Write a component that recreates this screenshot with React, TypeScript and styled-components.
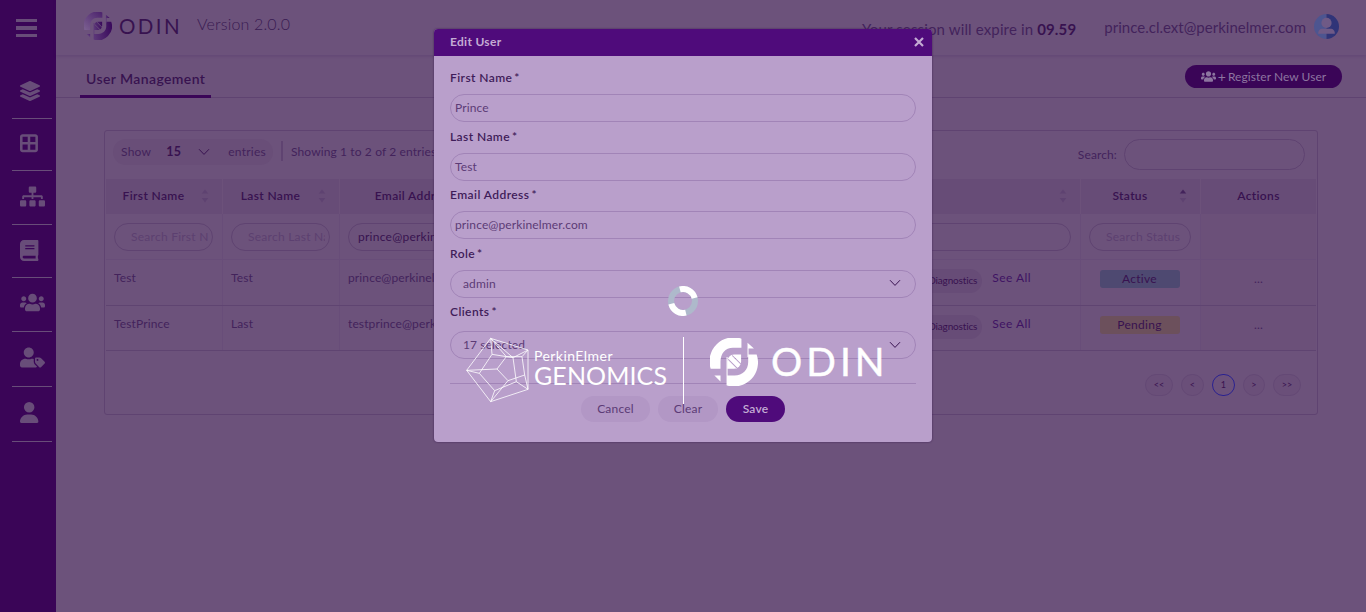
import React from 'react';
import styled, { createGlobalStyle } from 'styled-components';
import { FaLayerGroup, FaSitemap, FaBook, FaUsers, FaUserTag } from 'react-icons/fa';
import { FaBorderAll, FaUser } from 'react-icons/fa6';
import type { IconType } from 'react-icons';

const c = {
  page: '#6c527b',
  nav: '#3a0557',
  navIcon: '#684d79',
  line: '#5f4371',
  rowLine: '#5f4471',
  faint: '#684d79',
  shade: '#674c77',
  ink: '#381250',
  text: '#43235b',
  modal: '#b99fcb',
  brand: '#4f0b7b',
  field: '#a184b7',
  label: '#3f1c59',
  value: '#5c3b76',
};

const GlobalStyle = createGlobalStyle`
  * { box-sizing: border-box; }
  body {
    margin: 0;
    background: ${c.page};
    font-family: Lato, 'Open Sans', sans-serif;
    font-size: 12px;
    letter-spacing: 0.12px;
    color: ${c.text};
    overflow: hidden;
  }
`;

const Shell = styled.div`
  display: flex;
  width: 1366px;
  height: 612px;
  background: ${c.page};
`;

const Sidebar = styled.nav`
  flex: none;
  width: 56px;
  padding: 19px 4px 0 12px;
  background: ${c.nav};
  color: ${c.navIcon};
`;

const Burger = styled.div`
  display: grid;
  gap: 4px;
  width: 21px;
  margin: 0 0 28px 4px;
  span {
    height: 3.4px;
    background: currentColor;
  }
`;

const NavItem = styled.div<{ $h: number; $lift: number }>`
  display: flex;
  align-items: center;
  height: ${(p) => p.$h}px;
  padding: 0 0 ${(p) => p.$lift * 2}px 8px;
  border-bottom: 1px solid ${c.navIcon};
`;

const Main = styled.div`
  flex: 1;
  min-width: 0;
`;

const Header = styled.header`
  display: flex;
  align-items: flex-start;
  height: 55px;
  padding: 12px 27px 0 28px;
  box-shadow: 0 1px 3px rgba(60, 20, 90, 0.2);
`;

const Brand = styled.span`
  width: 66px;
  margin: 0 0 0 7px;
  font-size: 20.5px;
  line-height: 28px;
  letter-spacing: 2.4px;
  color: ${c.ink};
`;

const Version = styled.span`
  margin: 1px auto 0 12px;
  font-size: 16px;
  font-weight: 300;
  line-height: 22px;
  letter-spacing: 0.16px;
  color: #391a52;
`;

const Session = styled.span`
  margin: 7px 28px 0 0;
  font-size: 15px;
  line-height: 20px;
  letter-spacing: 0.14px;
  b { color: ${c.ink}; }
`;

const Account = styled.span`
  margin: 5px 8px 0 0;
  font-size: 15px;
  line-height: 20px;
  letter-spacing: 0.02px;
`;

const Avatar = styled.svg`
  margin-top: 2px;
`;

const TabBar = styled.div`
  display: flex;
  justify-content: space-between;
  height: 43px;
  padding: 10px 24px 0 24px;
  border-bottom: 1px solid ${c.line};
`;

const Tab = styled.div`
  width: 131px;
  height: 33px;
  padding: 3px 6px 0;
  font-size: 14px;
  font-weight: 600;
  line-height: 22px;
  letter-spacing: 0.4px;
  white-space: nowrap;
  color: ${c.ink};
  border-bottom: 3px solid ${c.nav};
`;

const RegisterButton = styled.button`
  display: flex;
  align-items: center;
  justify-content: center;
  width: 157px;
  height: 23px;
  padding: 0 0 1px;
  border: 0;
  border-radius: 12px;
  background: ${c.nav};
  font: inherit;
  letter-spacing: 0.05px;
  color: #8d75a0;
  svg { margin-right: 2px; }
  b { margin-right: 2px; font-size: 14px; font-weight: 400; }
`;

const Card = styled.section`
  width: 1214px;
  height: 285px;
  margin: 32px 0 0 48px;
  border: 1px solid ${c.line};
  border-radius: 3px;
`;

const Toolbar = styled.div`
  display: flex;
  height: 48px;
  padding: 8px 12px 0 8px;
`;

const Entries = styled.div`
  display: flex;
  align-items: center;
  width: 160px;
  height: 26px;
  padding: 0 0 1px 8px;
  border-radius: 13px;
  background: #694e78;
  letter-spacing: 0.25px;
  b { margin: 0 17px 0 15px; font-size: 12.5px; font-weight: 700; color: ${c.ink}; }
  svg { margin-right: 18px; }
`;

const Showing = styled.div`
  height: 20px;
  margin: 2px auto 0 8px;
  padding-left: 8px;
  border-left: 2px solid ${c.line};
  line-height: 22px;
  white-space: nowrap;
`;

const SearchLabel = styled.label`
  display: flex;
  align-items: center;
  gap: 7px;
  height: 31px;
`;

const SearchBox = styled.span`
  width: 181px;
  height: 31px;
  border: 1px solid ${c.line};
  border-radius: 16px;
`;

const GridRow = styled.div<{ $h: number; $head?: boolean; $filter?: boolean }>`
  display: grid;
  grid-template-columns: 117px 117px 170px 571px 120px 115px;
  height: ${(p) => p.$h}px;
  margin: 0 1px;
  background: ${(p) => (p.$head ? c.shade : 'transparent')};
  border-bottom: ${(p) => (p.$head ? 0 : 1)}px solid ${(p) => (p.$filter ? c.faint : c.rowLine)};
`;

const HeadCell = styled.div`
  display: flex;
  align-items: center;
  padding: 0 13px 2px 0;
  font-weight: 600;
  letter-spacing: 0.36px;
  color: ${c.ink};
  border-right: 1px solid #6c517a;
  &:last-child { padding-right: 0; border: 0; }
  span { flex: 1; text-align: center; }
`;

const Cell = styled.div<{ $center?: boolean; $filter?: boolean }>`
  display: flex;
  justify-content: ${(p) => (p.$center ? 'center' : 'flex-start')};
  padding: ${(p) => (p.$filter ? 9 : 8)}px 8px 0;
  line-height: 19px;
  white-space: nowrap;
  border-right: 1px solid ${c.faint};
  overflow: hidden;
  &:last-child { background: #6b5079; border: 0; }
`;

const ClientsCell = styled(Cell)`
  justify-content: flex-end;
  padding-right: 49px;
  letter-spacing: 0.45px;
  color: #3f1363;
`;

const Chip = styled.span`
  height: 24px;
  margin: 1px 10px 0 0;
  padding: 0 5px 0 12px;
  border-radius: 12px;
  background: ${c.shade};
  font-size: 10px;
  line-height: 23px;
  letter-spacing: -0.15px;
  color: ${c.ink};
`;

const Filter = styled.div<{ $value?: boolean }>`
  flex: none;
  width: calc(100% - ${(p) => (p.$value ? 0 : 1)}px);
  height: 28px;
  padding: 0 4px 0 ${(p) => (p.$value ? 9 : 16)}px;
  border: 1px solid ${c.line};
  border-radius: 14px;
  line-height: 26px;
  letter-spacing: 0.25px;
  color: ${(p) => (p.$value ? c.ink : '#5c4070')};
  span { display: block; overflow: hidden; }
`;

const Status = styled.span<{ $tone: string }>`
  width: 80px;
  height: 18px;
  margin: 2px 2px 0 0;
  border-radius: 3px;
  background: ${(p) => p.$tone};
  line-height: 17px;
  letter-spacing: 0.3px;
  text-align: center;
  color: ${c.ink};
`;

const Dots = styled.span`
  margin-top: 1px;
`;

const Pager = styled.div`
  display: flex;
  justify-content: flex-end;
  gap: 8px;
  padding: 23px 16px 0 0;
`;

const Page = styled.span<{ $w: number; $on?: boolean }>`
  width: ${(p) => p.$w}px;
  height: 22px;
  border: 1px solid ${(p) => (p.$on ? '#2a2190' : '#644975')};
  border-radius: 11px;
  background: ${(p) => (p.$on ? 'transparent' : '#6a4f79')};
  font-size: 9px;
  line-height: 19px;
  text-align: center;
  color: ${c.ink};
`;

const Modal = styled.div`
  position: absolute;
  left: 434px;
  top: 29px;
  width: 498px;
  height: 413px;
  border-radius: 4px;
  background: ${c.modal};
  box-shadow: 0 0 2px #3b1c50;
  overflow: hidden;
`;

const ModalHead = styled.div`
  display: flex;
  align-items: center;
  justify-content: space-between;
  height: 27px;
  padding: 0 8px 2px 16px;
  background: ${c.brand};
  font-weight: 700;
  letter-spacing: 0.3px;
  color: #c4abd4;
`;

const ModalBody = styled.div`
  padding: 15px 16px 0;
`;

const Field = styled.div<{ $tall: boolean }>`
  height: ${(p) => (p.$tall ? 72 : 58.5)}px;
`;

const Label = styled.div<{ $tall: boolean }>`
  height: 16px;
  margin-bottom: ${(p) => (p.$tall ? 10 : 7)}px;
  line-height: 14.8px;
  font-weight: 600;
  letter-spacing: 0.42px;
  color: ${c.label};
  span { margin-left: 2px; }
`;

const Input = styled.div<{ $select?: boolean }>`
  display: flex;
  align-items: center;
  justify-content: space-between;
  width: 466px;
  height: 28px;
  padding: 0 14px 1px ${(p) => (p.$select ? 12 : 4)}px;
  border: 1px solid ${c.field};
  border-radius: 14px;
  letter-spacing: 0.12px;
  color: ${c.value};
`;

const Footer = styled.div`
  display: flex;
  justify-content: center;
  gap: 8px;
  margin-top: 6px;
  padding-top: 12px;
  border-top: 1px solid ${c.field};
`;

const Button = styled.button<{ $w: number; $primary?: boolean }>`
  width: ${(p) => p.$w}px;
  height: 26px;
  padding: 0 0 1px;
  border: 0;
  border-radius: 13px;
  background: ${(p) => (p.$primary ? c.brand : '#b297c5')};
  font: inherit;
  font-weight: ${(p) => (p.$primary ? 600 : 400)};
  letter-spacing: 0.2px;
  color: ${(p) => (p.$primary ? '#c4abd4' : c.value)};
`;

const Loader = styled.div`
  position: absolute;
  left: 466px;
  top: 286px;
  width: 434px;
  color: #fff;
`;

const Spinner = styled.svg`
  display: block;
  margin: 0 auto 21px;
`;

const Logos = styled.div`
  display: flex;
  align-items: flex-start;
  height: 68px;
`;

const Genomics = styled.div`
  flex: none;
  width: 154px;
  height: 67px;
  padding: 12px 0 0 4px;
  border-right: 1.5px solid #fff;
  white-space: nowrap;
  div { font-size: 14px; line-height: 14px; letter-spacing: 0.45px; }
  strong { display: block; font-size: 25px; font-weight: 400; line-height: 24px; letter-spacing: 0.1px; }
`;

const BigMark = styled.span`
  margin: 1px 13px 0 26px;
`;

const BigBrand = styled.span`
  font-size: 39px;
  line-height: 48px;
  letter-spacing: 4px;
  -webkit-text-stroke: 0.4px #fff;
`;

function Chevron() {
  return (
    <svg width="12" height="8" viewBox="0 0 12 8" fill="none" stroke={c.ink} strokeWidth="1">
      <path d="M1 1.2 L6 6.4 L11 1.2" />
    </svg>
  );
}

function Sort({ asc }: { asc?: boolean }) {
  return (
    <svg width="8" height="14" viewBox="0 0 8 14">
      <path d="M4 0.5 L7.2 4.5 H0.8 Z" fill={asc ? '#43235b' : '#5e4271'} />
      <path d="M4 13.5 L7.2 9 H0.8 Z" fill="#5e4271" />
    </svg>
  );
}

function OdinMark({ size, left, right }: { size: number; left: string; right: string }) {
  return (
    <svg width={size} height={size} viewBox="17 24 142 142" display="block">
      <g fill={left}>
        <path d="M110 26 A71 71 0 0 0 19 115 H48 V95 C48 70 62 53 85 53 H110 Z" />
        <path d="M30 135 H48 V153 Z" />
      </g>
      <g fill={right}>
        <path d="M130 73 H155 A71 71 0 0 1 66 164 V80 H69 V135 H90 C113 135 130 118 130 95 Z" />
        <path d="M128 38 L147 55 H131 V80 H128 Z" />
        <path
          fillRule="evenodd"
          d="M88 73 H109 V94 A21 21 0 0 1 88 115 H68 V94 A20 20 0 0 1 88 73 Z M70 88 L96 114 L98 112 L72 86 Z M81 76 L107 102 L108 99 L84 75 Z"
        />
      </g>
    </svg>
  );
}

function Polyhedron() {
  return (
    <svg width="64" height="68" viewBox="14 21 192 204" fill="none" stroke="#fff" strokeWidth="2.4" strokeLinejoin="round">
      <path d="M88 25 L200 60 V178 L88 215 L16 121 Z" />
      <path d="M88 25 L92 73 L54 130 L100 182 L165 155 L155 83 Z M92 73 L155 83 L200 60" />
      <path d="M16 121 L54 130 M100 182 L88 215 M165 155 L200 178" />
      <path d="M16 121 L107 117 L135 80 L182 80 L190 135 L140 152 L107 117" />
      <path d="M135 80 L88 25 M182 80 L200 60 M190 135 L200 178 M140 152 L88 215" />
    </svg>
  );
}

const nav: [IconType, number, number, number][] = [
  [FaLayerGroup, 20, 54, 0.5],
  [FaBorderAll, 20.5, 52, 1],
  [FaSitemap, 25, 54, 1.5],
  [FaBook, 21, 53, 1],
  [FaUsers, 25, 54, 2],
  [FaUserTag, 25, 55, 2],
  [FaUser, 21, 55, 1.5],
];

const rows = [
  { first: 'Test', last: 'Test', email: 'prince@perkinelmer.com', status: 'Active', tone: '#4e4971' },
  { first: 'TestPrince', last: 'Last', email: 'testprince@perkinelmer.com', status: 'Pending', tone: '#6c505c' },
];

const fields = ['Prince', 'Test', 'prince@perkinelmer.com', 'admin', '17 selected'];
const labels = ['First Name', 'Last Name', 'Email Address', 'Role', 'Clients'];

export default function App() {
  return (
    <>
      <GlobalStyle />
      <Shell>
        <Sidebar>
          <Burger><span /><span /><span /></Burger>
          {nav.map(([Icon, size, h, lift], i) => (
            <NavItem key={i} $h={h} $lift={lift}>
              <Icon size={size} preserveAspectRatio="xMinYMid meet" />
            </NavItem>
          ))}
        </Sidebar>
        <Main>
          <Header>
            <svg width="0" height="0">
              <defs>
                <linearGradient id="markLeft" x1="0" y1="1" x2="1" y2="0">
                  <stop offset="0" stopColor="#7c6191" />
                  <stop offset="1" stopColor="#4b216c" />
                </linearGradient>
                <linearGradient id="markRight" x1="0" y1="0.6" x2="1" y2="0.4">
                  <stop offset="0" stopColor="#5b3678" />
                  <stop offset="1" stopColor="#3a0a5c" />
                </linearGradient>
              </defs>
            </svg>
            <OdinMark size={28} left="url(#markLeft)" right="url(#markRight)" />
            <Brand>ODIN</Brand>
            <Version>Version 2.0.0</Version>
            <Session>Your session will expire in <b>09.59</b></Session>
            <Account>prince.cl.ext@perkinelmer.com</Account>
            <Avatar width="25" height="25" viewBox="0 0 24 24">
              <path d="M12 0 A12 12 0 0 0 12 24 Z" fill="#4d5590" />
              <path d="M12 0 A12 12 0 0 1 12 24 Z" fill="#303478" />
              <circle cx="12" cy="8.6" r="4.9" fill="#6f5a86" />
              <path d="M4 19 C4 15.5 6 14.2 8 14.2 H16 C18 14.2 20 15.5 20 19 Z" fill="#6f5a86" />
            </Avatar>
          </Header>
          <TabBar>
            <Tab>User Management</Tab>
            <RegisterButton>
              <FaUsers size={15} />
              <b>+</b>
              Register New User
            </RegisterButton>
          </TabBar>
          <Card>
            <Toolbar>
              <Entries>Show<b>15</b><Chevron />entries</Entries>
              <Showing>Showing 1 to 2 of 2 entries</Showing>
              <SearchLabel>Search:<SearchBox /></SearchLabel>
            </Toolbar>
            <GridRow $h={35} $head>
              <HeadCell><span>First Name</span><Sort /></HeadCell>
              <HeadCell><span>Last Name</span><Sort /></HeadCell>
              <HeadCell><span>Email Address</span><Sort /></HeadCell>
              <HeadCell><span /><Sort /></HeadCell>
              <HeadCell><span>Status</span><Sort asc /></HeadCell>
              <HeadCell><span>Actions</span></HeadCell>
            </GridRow>
            <GridRow $h={46} $filter>
              <Cell $filter><Filter><span>Search First Name</span></Filter></Cell>
              <Cell $filter><Filter><span>Search Last Name</span></Filter></Cell>
              <Cell $filter><Filter $value><span>prince@perkinelmer.com</span></Filter></Cell>
              <Cell $filter><Filter /></Cell>
              <Cell $filter><Filter><span>Search Status</span></Filter></Cell>
              <Cell />
            </GridRow>
            {rows.map((r) => (
              <GridRow key={r.status} $h={r.status === 'Active' ? 46 : 45}>
                <Cell>{r.first}</Cell>
                <Cell>{r.last}</Cell>
                <Cell>{r.email}</Cell>
                <ClientsCell><Chip>Diagnostics</Chip>See All</ClientsCell>
                <Cell $center><Status $tone={r.tone}>{r.status}</Status></Cell>
                <Cell $center><Dots>...</Dots></Cell>
              </GridRow>
            ))}
            <Pager>
              <Page $w={28}>&lt;&lt;</Page>
              <Page $w={23}>&lt;</Page>
              <Page $w={23} $on>1</Page>
              <Page $w={22}>&gt;</Page>
              <Page $w={28}>&gt;&gt;</Page>
            </Pager>
          </Card>
        </Main>
      </Shell>
      <Modal>
        <ModalHead>
          Edit User
          <svg width="10" height="10" viewBox="0 0 10 10" stroke="#c4abd4" strokeWidth="2.2">
            <path d="M1 1 L9 9 M9 1 L1 9" />
          </svg>
        </ModalHead>
        <ModalBody>
          {labels.map((l, i) => (
            <Field key={l} $tall={i === 4}>
              <Label $tall={i === 4}>{l}<span>*</span></Label>
              <Input $select={i > 2}>{fields[i]}{i > 2 && <Chevron />}</Input>
            </Field>
          ))}
          <Footer>
            <Button $w={69}>Cancel</Button>
            <Button $w={60}>Clear</Button>
            <Button $w={59} $primary>Save</Button>
          </Footer>
        </ModalBody>
      </Modal>
      <Loader>
        <Spinner width="30" height="30" viewBox="0 0 30 30" fill="none" strokeWidth="6">
          <circle cx="15" cy="15" r="12" stroke="#aeb9cb" />
          <circle cx="15" cy="15" r="12" stroke="#fff" strokeDasharray="18.85 18.85" transform="rotate(-105 15 15)" />
        </Spinner>
        <Logos>
          <Polyhedron />
          <Genomics>
            <div>PerkinElmer</div>
            <strong>GENOMICS</strong>
          </Genomics>
          <BigMark><OdinMark size={48} left="#fff" right="#fff" /></BigMark>
          <BigBrand>ODIN</BigBrand>
        </Logos>
      </Loader>
    </>
  );
}
